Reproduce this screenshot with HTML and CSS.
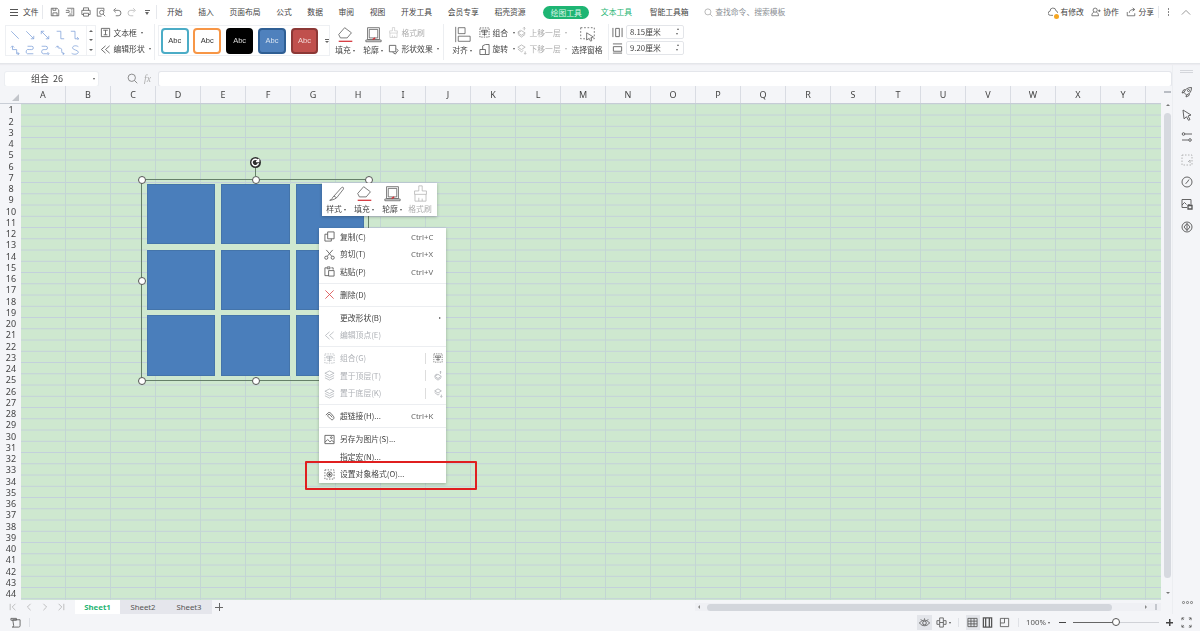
FILE: index.html
```html
<!DOCTYPE html>
<html lang="zh-CN">
<head>
<meta charset="utf-8">
<title>WPS 表格</title>
<link rel="stylesheet" href="styles.css">
</head>
<body>
<svg class="defs" width="0" height="0" aria-hidden="true">
  <defs>
    <symbol id="i-save" viewBox="0 0 12 12"><path d="M1.500 1.500h7l2 2v7h-9zM3.500 10.500v-3.500h5v3.500M3.500 1.500v2.500h3.500v-2.500"/></symbol>
    <symbol id="i-export" viewBox="0 0 12 12"><path d="M2.500 1.500h8v9h-7M1 4h4M1 6.500h4v-2M7 3.500h2M7 6h2M5 8.500h4"/></symbol>
    <symbol id="i-print" viewBox="0 0 12 12"><path d="M3 4v-3h6v3M3 9h-2v-5h10v5h-2M3 7.500h6v3.500h-6z"/></symbol>
    <symbol id="i-preview" viewBox="0 0 12 12"><path d="M9.500 5v-3.500h-8v9.500h5"/><circle cx="6.800" cy="6.500" r="2.500"/><path d="M8.500 8.500l2.500 2.500"/></symbol>
    <symbol id="i-undo" viewBox="0 0 12 12"><path d="M3 4h4.500a3 3 0 0 1 0 6.500h-3M4.500 1.500l-2.500 2.500 2.500 2.500"/></symbol>
    <symbol id="i-redo" viewBox="0 0 12 12"><path d="M9 4h-4.500a3 3 0 0 0 0 6.500h3M7.500 1.500l2.500 2.500-2.500 2.500"/></symbol>
    <symbol id="i-l1" viewBox="0 0 12 12"><path d="M1.500 1.500l9 9"/></symbol>
    <symbol id="i-l2" viewBox="0 0 12 12"><path d="M1.500 1.500l9 9M10.500 7v3.500h-3.500"/></symbol>
    <symbol id="i-l3" viewBox="0 0 12 12"><path d="M1.500 1.500l9 9M5 1.500h-3.500v3.500M10.500 7v3.500h-3.500"/></symbol>
    <symbol id="i-l4" viewBox="0 0 12 12"><path d="M2 1.500h5v9h4"/></symbol>
    <symbol id="i-l5" viewBox="0 0 12 12"><path d="M1 1.500h5v9h4M8.500 8.500l2 2-2 2"/></symbol>
    <symbol id="i-l6" viewBox="0 0 12 12"><path d="M1 3l2-2 2 2M3 1.500v4h5v5h3M9 8.500l2 2-2 1.500"/></symbol>
    <symbol id="i-l7" viewBox="0 0 12 12"><path d="M3 1.500h5a2 2 0 0 1 0 4h-3a2.500 2.500 0 0 0-2 5h7"/></symbol>
    <symbol id="i-l8" viewBox="0 0 12 12"><path d="M2 1.500h5a2 2 0 0 1 0 4h-2a2.500 2.500 0 0 0-1 5h6M9 8.500l2 2-2 1.500"/></symbol>
    <symbol id="i-l9" viewBox="0 0 12 12"><path d="M1 3l2-2 2 2M3 1.500c0 4 5 1 5 4s0 5 3 5M9 8.500l2 2-2 1.500"/></symbol>
    <symbol id="i-l10" viewBox="0 0 12 12"><path d="M10 2c-3-2-7-1-7 1.500s7 2.500 7 5-5 3.500-8 1.500"/></symbol>
    <symbol id="i-textbox" viewBox="0 0 12 12"><path d="M1.500 1.500h9v9h-9zM3.500 3.500h5M6 3.500v5M4 8.500h4"/></symbol>
    <symbol id="i-edit" viewBox="0 0 12 12"><path d="M6 2l-4.500 4 4.500 4M10.500 2l-4.500 4 4.500 4"/></symbol>
    <symbol id="i-fill" viewBox="0 0 20 20"><path d="M9 2l8 6-5 6h-8l-2-4z"/><path class="red" d="M2 18h16"/></symbol>
    <symbol id="i-outline" viewBox="0 0 20 20"><path d="M3 2h14v14h-14zM5 4h10v10h-10zM1 16.500h18v2h-18z"/><path class="red" d="M9 16l3-2"/></symbol>
    <symbol id="i-brush" viewBox="0 0 20 20"><path d="M8 1h4v6h5v4h-14v-4h5zM3.500 11v8h13v-8M8 19v-4M12 19v-3"/></symbol>
    <symbol id="i-effect" viewBox="0 0 12 12"><path d="M1.500 1.500h7v7h-7zM9 5l2 2-3 4-3-2"/></symbol>
    <symbol id="i-align" viewBox="0 0 20 20"><path d="M2 1v18M5 2h8v7h-8zM5 12h14v6h-14z"/></symbol>
    <symbol id="i-group" viewBox="0 0 12 12"><path stroke-dasharray="1.500 1.200" d="M1 1h10v10h-10z"/><path d="M3 3.500h6v2h-6zM6 3.500v6M3.500 8h5"/></symbol>
    <symbol id="i-rotate" viewBox="0 0 12 12"><path d="M1 6h6v5.500h-6zM4 6v-4l3-1.500 4 0v11h-4"/></symbol>
    <symbol id="i-up" viewBox="0 0 12 12"><path d="M6 4l4 2.500-4 2.500-4-2.500zM2 8l4 3 4-3M9 3.500v-3M7.800 1.500l1.200-1.200 1.200 1.200"/><path d="M5 3.500l-3 2"/></symbol>
    <symbol id="i-down" viewBox="0 0 12 12"><path d="M6 1l4 2.500-4 2.500-4-2.500zM2 5.500l4 3 2-1.500M10 8v3M8.800 10l1.200 1.200 1.200-1.200"/></symbol>
    <symbol id="i-pane" viewBox="0 0 20 20"><path stroke-dasharray="2 2" d="M2 2h16v13h-16z"/><path d="M9 8l8 5-3 .8 1 3.500-1.500.5-1.500-3.200-3 1.800z" fill="#fff"/></symbol>
    <symbol id="i-w" viewBox="0 0 12 12"><path d="M1 1v10M11 1v10M4 1.500h4v9h-4z"/></symbol>
    <symbol id="i-h" viewBox="0 0 12 12"><path d="M1 1h10M1 11h10M1.500 4h9v5h-9z"/></symbol>
    <symbol id="i-search" viewBox="0 0 12 12"><circle cx="5.200" cy="5.200" r="4"/><path d="M8.200 8.200l3 3"/></symbol>
    <symbol id="i-cloud" viewBox="0 0 12 12"><path d="M6 10h-3a2.500 2.500 0 0 1-.5-5 3.500 3.500 0 0 1 7-.5 2.500 2.500 0 0 1 2 2.500"/></symbol>
    <symbol id="i-user" viewBox="0 0 12 12"><circle cx="5" cy="3.800" r="2.500"/><path d="M1 10.500c0-3 1.500-4 2.500-4.500M6.500 6c1 .5 2.500 1.500 2.500 4.500h-8M10 3v3M8.500 4.500h3"/></symbol>
    <symbol id="i-share" viewBox="0 0 12 12"><path d="M1.500 6v4.500h9v-3M4 7c0-3 2-4 6-4M8 1l2.500 2-2.500 2"/></symbol>
    <symbol id="i-brushpen" viewBox="0 0 20 20"><path d="M2 18c3 0 3-4 5-5l9-10c1.500-1 3 0 2 2l-7 9c-1 2-6 4-9 4zM7 13l3 2"/></symbol>
    <symbol id="i-copy" viewBox="0 0 12 12"><path d="M4 1h7v7.500h-7zM4 3.500h-3v7.500h7v-2.500"/></symbol>
    <symbol id="i-cut" viewBox="0 0 12 12"><circle cx="2.500" cy="9.500" r="1.700"/><circle cx="9.500" cy="9.500" r="1.700"/><path d="M3.500 8l6-7M8.500 8l-6-7"/></symbol>
    <symbol id="i-paste" viewBox="0 0 12 12"><path d="M3 2h-2v8.500h4M8 2h2v2M3.500 1h3v2h-3zM5 5h6v6h-6z"/></symbol>
    <symbol id="i-x" viewBox="0 0 12 12"><path d="M1.500 1.500l9 9M10.500 1.500l-9 9"/></symbol>
    <symbol id="i-layer" viewBox="0 0 12 12"><path d="M6 1l5 2.500-5 2.500-5-2.500zM1 6l5 2.500 5-2.500M1 8.500l5 2.500 5-2.500"/></symbol>
    <symbol id="i-link" viewBox="0 0 12 12"><path d="M2 4.500l2.500-2.500c1-1 2.500 0 3 .5l2.500 3c1 1 1 2 .5 3s-2 1.500-3 .5l-3-3c-.5-1-.5-1.500 0-2s1.500-.5 2 0l2.500 3"/></symbol>
    <symbol id="i-pic" viewBox="0 0 12 12"><path d="M1 1.500h10v9h-10zM1 9l3-3 2.500 2.500 2-1.500 2.500 2"/><circle cx="8" cy="4" r="1"/></symbol>
    <symbol id="i-format" viewBox="0 0 12 12"><path stroke-dasharray="1.500 1.500" d="M1 1h10v10h-10z"/><circle cx="6" cy="6" r="2.800"/><circle cx="6" cy="6" r="1" fill="#555"/></symbol>
    <symbol id="i-eye" viewBox="0 0 12 12"><path d="M.5 6.500c3-4 8-4 11 0-3 4-8 4-11 0z"/><circle cx="6" cy="6.500" r="2"/><path d="M2 2.500l1 1.200M6 1.500v1.500M10 2.500l-1 1.200"/></symbol>
    <symbol id="i-cross" viewBox="0 0 12 12"><path d="M4 1h4v3h3v4h-3v3h-4v-3h-3v-4h3zM4 4v4M8 4v4M4 6h4"/></symbol>
    <symbol id="i-normal" viewBox="0 0 12 12"><path d="M1 1.500h10v9h-10zM1 4.500h10M1 7.500h10M4.300 1.500v9M7.700 1.500v9"/></symbol>
    <symbol id="i-page" viewBox="0 0 12 12"><path d="M1.500 1h9v10h-9zM4 1v10M8 1v10" stroke-width="1.400"/></symbol>
    <symbol id="i-break" viewBox="0 0 12 12"><path d="M1.500 1.500h9v9h-9zM6 1.500v5h-4.500"/></symbol>
    <symbol id="i-full" viewBox="0 0 12 12"><path d="M1 3.500v-2.500h2.500M8.500 1h2.500v2.500M1 8.500v2.500h2.500M11 8.500v2.500h-2.500M1 1l2 2M11 1l-2 2M1 11l2-2M11 11l-2-2"/></symbol>
    <symbol id="i-macro" viewBox="0 0 12 12"><path d="M3 3h8v6.500a1.500 1.500 0 0 1-1.500 1.500h-7a1.500 1.500 0 0 0 1.500-1.500zM1 1.500h6v2h-6z"/></symbol>
    <symbol id="i-rocket" viewBox="0 0 12 12"><path d="M10.500 1.500c-4 0-6 1.500-7.500 5l2.500 2.500c3.500-1.500 5-3.500 5-7.500zM3 6.500l-2 .5 1.500-3 2-.5M5.500 9l-.5 2 3-1.500.5-2"/><circle cx="7.500" cy="4.500" r="1"/></symbol>
    <symbol id="i-cursor" viewBox="0 0 12 12"><path d="M2 1l8 5-3 1 2 3.500-1.500 .8-2-3.500-2.500 2z"/></symbol>
    <symbol id="i-sliders" viewBox="0 0 12 12"><circle cx="2.500" cy="3" r="1.300"/><path d="M4 3h7M1 9h6.500"/><circle cx="9" cy="9" r="1.300"/></symbol>
    <symbol id="i-sel" viewBox="0 0 12 12"><path stroke-dasharray="1.500 1.500" d="M1 1h10v10h-10z"/><path d="M7 8l2-2v3"/></symbol>
    <symbol id="i-clock" viewBox="0 0 12 12"><circle cx="6" cy="6" r="5"/><path d="M8 3.500l-2 3-1.500 1"/></symbol>
    <symbol id="i-imgedit" viewBox="0 0 12 12"><path d="M1 1.500h9v6M1 1.500v8h5M1 7l2.500-2.500 2 2"/><path d="M7 7.500h4v3.500h-4zM8 6v1.500" stroke-width="1.300"/></symbol>
    <symbol id="i-badge" viewBox="0 0 12 12"><circle cx="6" cy="6" r="5"/><path d="M6 2.500l3 3.500-3 3.500-3-3.500zM6 2.500v7"/></symbol>
    <symbol id="i-rot" viewBox="0 0 12 12"><path d="M8.800 4.200a3.500 3.500 0 1 0 .4 2.500M9.500 2v3h-3"/></symbol>
  </defs>
</svg>

<header class="titlebar">
  <div class="menu-btn">
    <span class="burger"><i></i><i></i><i></i></span>
    <span class="file">文件</span>
  </div>
  <div class="qa">
    <span class="qa-item"><svg class="ic ic10"><use href="#i-save"/></svg></span>
    <span class="qa-item"><svg class="ic ic10"><use href="#i-export"/></svg></span>
    <span class="qa-item"><svg class="ic ic10"><use href="#i-print"/></svg></span>
    <span class="qa-item"><svg class="ic ic10"><use href="#i-preview"/></svg></span>
    <span class="qa-item"><svg class="ic ic10"><use href="#i-undo"/></svg></span>
    <span class="qa-item dim"><svg class="ic ic10"><use href="#i-redo"/></svg></span>
    <span class="qa-item"><span class="qa-more"></span></span>
  </div>
  <nav class="tabs-nav">
    <span>开始</span><span>插入</span><span>页面布局</span><span>公式</span><span>数据</span><span>审阅</span><span>视图</span><span>开发工具</span><span>会员专享</span><span>稻壳资源</span>
    <span class="pill">绘图工具</span>
    <span class="green">文本工具</span>
    <span class="smart">智能工具箱</span>
    <span class="search"><svg class="ic ic9"><use href="#i-search"/></svg>查找命令、搜索模板</span>
  </nav>
  <div class="title-right">
    <span class="tr-item cloud"><svg class="ic ic10"><use href="#i-cloud"/></svg><b class="dot"></b>有修改</span>
    <span class="tr-item"><svg class="ic ic10"><use href="#i-user"/></svg>协作</span>
    <span class="tr-item"><svg class="ic ic10"><use href="#i-share"/></svg>分享</span>
    <span class="tr-dots"><i></i><i></i><i></i></span>
    <svg class="tr-chevron" viewBox="0 0 12 8"><path d="M1 6.500l5-5 5 5"/></svg>
  </div>
</header>

<section class="ribbon">
  <div class="gallery lines">
    <div class="line-grid">
      <svg class="ic line"><use href="#i-l1"/></svg><svg class="ic line"><use href="#i-l2"/></svg><svg class="ic line"><use href="#i-l3"/></svg><svg class="ic line"><use href="#i-l4"/></svg><svg class="ic line"><use href="#i-l5"/></svg>
      <svg class="ic line"><use href="#i-l6"/></svg><svg class="ic line"><use href="#i-l7"/></svg><svg class="ic line"><use href="#i-l8"/></svg><svg class="ic line"><use href="#i-l9"/></svg><svg class="ic line"><use href="#i-l10"/></svg>
    </div>
    <div class="gal-scroll"><i class="up"></i><i class="dn"></i><i class="dn more"></i></div>
  </div>
  <div class="stack textgroup">
    <span class="cmd"><svg class="ic ic11"><use href="#i-textbox"/></svg>文本框<em class="caret"></em></span>
    <span class="cmd"><svg class="ic ic11"><use href="#i-edit"/></svg>编辑形状<em class="caret"></em></span>
  </div>
  <div class="vsep sep1"></div>
  <div class="gallery styles">
    <span class="abc a1">Abc</span><span class="abc a2">Abc</span><span class="abc a3">Abc</span><span class="abc a4">Abc</span><span class="abc a5">Abc</span>
    <span class="abc-more"></span>
  </div>
  <div class="big fill"><svg class="ic ic17"><use href="#i-fill"/></svg><span>填充<em class="caret"></em></span></div>
  <div class="big outline"><svg class="ic ic17"><use href="#i-outline"/></svg><span>轮廓<em class="caret"></em></span></div>
  <div class="stack effects">
    <span class="cmd dim"><svg class="ic ic11"><use href="#i-brush"/></svg>格式刷</span>
    <span class="cmd"><svg class="ic ic11"><use href="#i-effect"/></svg>形状效果<em class="caret"></em></span>
  </div>
  <div class="vsep sep2"></div>
  <div class="big align"><svg class="ic ic17"><use href="#i-align"/></svg><span>对齐<em class="caret"></em></span></div>
  <div class="stack grp">
    <span class="cmd"><svg class="ic ic11"><use href="#i-group"/></svg>组合<em class="caret"></em></span>
    <span class="cmd"><svg class="ic ic11"><use href="#i-rotate"/></svg>旋转<em class="caret"></em></span>
  </div>
  <div class="stack layers">
    <span class="cmd dim"><svg class="ic ic11"><use href="#i-up"/></svg>上移一层<em class="caret"></em></span>
    <span class="cmd dim"><svg class="ic ic11"><use href="#i-down"/></svg>下移一层<em class="caret"></em></span>
  </div>
  <div class="big pane"><svg class="ic ic17"><use href="#i-pane"/></svg><span>选择窗格</span></div>
  <div class="vsep sep3"></div>
  <div class="sizes">
    <div class="size-row"><svg class="ic ic11"><use href="#i-w"/></svg><span class="spin">8.15厘米<em class="arrows"></em></span></div>
    <div class="size-row"><svg class="ic ic11"><use href="#i-h"/></svg><span class="spin">9.20厘米<em class="arrows"></em></span></div>
  </div>
</section>

<div class="workspace">
  <div class="work-main">
    <div class="formula">
      <div class="namebox">组合&nbsp;&nbsp;26<em class="caret"></em></div>
      <svg class="ic ic11 zoomi"><use href="#i-search"/></svg>
      <span class="fx">fx</span>
      <div class="input"></div>
    </div>
    <div class="sheet-row">
      <div class="sheet">
        <div class="corner"><i></i></div>
        <div class="cols">
          <span>A</span><span>B</span><span>C</span><span>D</span><span>E</span><span>F</span><span>G</span><span>H</span><span>I</span><span>J</span><span>K</span><span>L</span><span>M</span><span>N</span><span>O</span><span>P</span><span>Q</span><span>R</span><span>S</span><span>T</span><span>U</span><span>V</span><span>W</span><span>X</span><span>Y</span><span></span>
        </div>
        <div class="rows">
          <span>1</span><span>2</span><span>3</span><span>4</span><span>5</span><span>6</span><span>7</span><span>8</span><span>9</span><span>10</span><span>11</span><span>12</span><span>13</span><span>14</span><span>15</span><span>16</span><span>17</span><span>18</span><span>19</span><span>20</span><span>21</span><span>22</span><span>23</span><span>24</span><span>25</span><span>26</span><span>27</span><span>28</span><span>29</span><span>30</span><span>31</span><span>32</span><span>33</span><span>34</span><span>35</span><span>36</span><span>37</span><span>38</span><span>39</span><span>40</span><span>41</span><span>42</span><span>43</span><span>44</span>
        </div>
        <div class="cells"></div>

        <div class="shape-group">
          <div class="blocks"><i></i><i></i><i></i><i></i><i></i><i></i><i></i><i></i><i></i></div>
          <b class="h h-tl"></b><b class="h h-tc"></b><b class="h h-tr"></b><b class="h h-ml"></b><b class="h h-bl"></b><b class="h h-bc"></b>
          <span class="rot-stem"></span>
          <span class="rot"><svg viewBox="0 0 12 12"><use href="#i-rot"/></svg></span>
        </div>

        <div class="mini">
          <div class="mini-item"><svg class="ic ic17"><use href="#i-brushpen"/></svg><span>样式<em class="caret"></em></span></div>
          <div class="mini-item"><svg class="ic ic17"><use href="#i-fill"/></svg><span>填充<em class="caret"></em></span></div>
          <div class="mini-item"><svg class="ic ic17"><use href="#i-outline"/></svg><span>轮廓<em class="caret"></em></span></div>
          <div class="mini-item dim"><svg class="ic ic17"><use href="#i-brush"/></svg><span>格式刷</span></div>
        </div>

        <div class="ctx">
          <div class="mi"><svg class="ic ic11"><use href="#i-copy"/></svg><span class="lb">复制(C)</span><span class="sc">Ctrl+C</span></div>
          <div class="mi"><svg class="ic ic11"><use href="#i-cut"/></svg><span class="lb">剪切(T)</span><span class="sc">Ctrl+X</span></div>
          <div class="mi"><svg class="ic ic11"><use href="#i-paste"/></svg><span class="lb">粘贴(P)</span><span class="sc">Ctrl+V</span></div>
          <hr>
          <div class="mi"><svg class="ic ic11 redline"><use href="#i-x"/></svg><span class="lb">删除(D)</span></div>
          <hr>
          <div class="mi"><span class="noicon"></span><span class="lb">更改形状(B)</span><em class="sub"></em></div>
          <div class="mi off"><svg class="ic ic11"><use href="#i-edit"/></svg><span class="lb">编辑顶点(E)</span></div>
          <hr>
          <div class="mi off"><svg class="ic ic11"><use href="#i-group"/></svg><span class="lb">组合(G)</span><span class="side active"><svg class="ic ic10"><use href="#i-group"/></svg></span></div>
          <div class="mi off"><svg class="ic ic11"><use href="#i-layer"/></svg><span class="lb">置于顶层(T)</span><span class="side"><svg class="ic ic10"><use href="#i-up"/></svg></span></div>
          <div class="mi off"><svg class="ic ic11"><use href="#i-layer"/></svg><span class="lb">置于底层(K)</span><span class="side"><svg class="ic ic10"><use href="#i-down"/></svg></span></div>
          <hr>
          <div class="mi"><svg class="ic ic11"><use href="#i-link"/></svg><span class="lb">超链接(H)...</span><span class="sc">Ctrl+K</span></div>
          <hr>
          <div class="mi"><svg class="ic ic11"><use href="#i-pic"/></svg><span class="lb">另存为图片(S)...</span></div>
          <div class="mi"><span class="noicon"></span><span class="lb">指定宏(N)...</span></div>
          <div class="mi"><svg class="ic ic11"><use href="#i-format"/></svg><span class="lb">设置对象格式(O)...</span></div>
        </div>

        <div class="callout"></div>
      </div>
      <div class="vscroll">
        <i class="vs-dash"></i>
        <i class="vs-up"></i>
        <i class="vs-thumb"></i>
        <i class="vs-down"></i>
      </div>
    </div>
    <div class="tabbar">
      <div class="tab-nav">
        <svg viewBox="0 0 10 10"><path d="M1.500 1v8M8 1l-4 4 4 4"/></svg>
        <svg viewBox="0 0 10 10"><path d="M7 1l-4 4 4 4"/></svg>
        <svg viewBox="0 0 10 10"><path d="M3 1l4 4-4 4"/></svg>
        <svg viewBox="0 0 10 10"><path d="M8.500 1v8M2 1l4 4-4 4"/></svg>
      </div>
      <span class="tab on">Sheet1</span><span class="tab">Sheet2</span><span class="tab">Sheet3</span>
      <span class="tab-add"></span>
      <div class="hscroll"><i class="hs-left"></i><i class="hs-thumb"></i><i class="hs-right"></i><i class="hs-bar"></i></div>
    </div>
  </div>
  <aside class="sidebar">
    <i class="grip"></i>
    <svg class="ic ic12"><use href="#i-rocket"/></svg>
    <svg class="ic ic12"><use href="#i-cursor"/></svg>
    <svg class="ic ic12"><use href="#i-sliders"/></svg>
    <svg class="ic ic12 dim"><use href="#i-sel"/></svg>
    <svg class="ic ic12"><use href="#i-clock"/></svg>
    <svg class="ic ic12"><use href="#i-imgedit"/></svg>
    <svg class="ic ic12"><use href="#i-badge"/></svg>
    <span class="side-dots"><i></i><i></i><i></i></span>
  </aside>
</div>

<footer class="status">
  <div class="st-left">
    <svg class="ic ic11"><use href="#i-macro"/></svg>
    <i class="st-sep"></i>
  </div>
  <div class="st-right">
    <span class="st-btn eye on"><svg class="ic ic11"><use href="#i-eye"/></svg></span>
    <span class="st-btn cross"><svg class="ic ic11"><use href="#i-cross"/></svg><em class="caret"></em></span>
    <i class="st-sep"></i>
    <span class="st-btn on view first"><svg class="ic ic11"><use href="#i-normal"/></svg></span>
    <span class="st-btn view"><svg class="ic ic11"><use href="#i-page"/></svg></span>
    <span class="st-btn view"><svg class="ic ic11"><use href="#i-break"/></svg></span>
    <i class="st-sep"></i>
    <span class="pct">100%<em class="caret"></em></span>
    <i class="minus"></i>
    <span class="slider"><b class="fillbar"></b><b class="knob"></b></span>
    <i class="plus"></i>
    <svg class="ic ic11 full"><use href="#i-full"/></svg>
  </div>
</footer>
</body>
</html>
```

FILE: styles.css
```css
* { box-sizing: border-box; }
html, body { margin: 0; padding: 0; }
body {
  width: 1200px;
  height: 631px;
  overflow: hidden;
  display: flex;
  flex-direction: column;
  background: #f4f5f8;
  color: #444;
  font: 7.8px/1 "Noto Sans CJK SC", "Noto Sans", sans-serif;
  filter: blur(.3px);
}
.defs { position: absolute; }
i, em, b { font-style: normal; font-weight: normal; }
.ic { fill: none; stroke: #555; stroke-width: .9; flex: none; overflow: visible; }
.ic .red, .red { stroke: #d4343a; stroke-width: 1.500; }
.ic10 { width: 10px; height: 10px; }
.ic9 { width: 9px; height: 9px; }
.ic11 { width: 11px; height: 11px; }
.ic12 { width: 12px; height: 12px; }
.ic17 { width: 17px; height: 17px; }
.dim { opacity: .45; }
.caret {
  display: inline-block;
  width: 0;
  height: 0;
  margin-left: 2px;
  vertical-align: middle;
  border: 1.800px solid transparent;
  border-top: 2px solid #555;
  border-bottom: 0;
}

/* title bar */
.titlebar {
  height: 24px;
  flex: none;
  background: #fff;
  display: flex;
  align-items: center;
  position: relative;
}
.menu-btn {
  width: 43px;
  padding-left: 10px;
  height: 14px;
  display: flex;
  align-items: center;
  gap: 5px;
  border-right: 1px solid #e6e8ec;
}
.burger { width: 8px; display: flex; flex-direction: column; gap: 2px; }
.burger i { display: block; height: 1px; background: #555; }
.file { width: 16px; }
.qa {
  display: flex;
  width: 114px;
  padding-left: 4px;
  height: 14px;
  align-items: center;
  border-right: 1px solid #e6e8ec;
}
.qa-item { width: 15.500px; display: flex; justify-content: center; align-items: center; }
.qa-more { width: 5px; height: 5px; border-top: 1px solid #666; position: relative; }
.qa-more::after {
  content: "";
  position: absolute;
  left: 0;
  top: 1px;
  border: 2.500px solid transparent;
  border-top: 3px solid #666;
  border-bottom: 0;
}
.tabs-nav {
  margin-left: 10px;
  display: flex;
  align-items: center;
  gap: 15.600px;
  white-space: nowrap;
}
.pill {
  width: 46px;
  height: 13px;
  border-radius: 7px;
  background: #1eb573;
  color: #dff5ea;
  text-align: center;
  line-height: 13px;
  margin-left: 2px;
  margin-right: -4px;
}
.green { color: #1fb574; }
.smart { margin-left: 2px; }
.search { display: flex; align-items: center; gap: 2px; color: #8b8f96; }
.search .ic { stroke: #999; }
.title-right {
  position: absolute;
  right: 7px;
  top: 5px;
  height: 14px;
  display: flex;
  align-items: center;
}
.tr-item { display: flex; align-items: center; gap: 2.500px; margin-right: 7px; position: relative; }
.dot {
  position: absolute;
  left: 6px;
  top: 7px;
  width: 5px;
  height: 5px;
  border-radius: 50%;
  background: #f5a623;
}
.tr-dots {
  width: 20px;
  height: 12px;
  margin-left: -3px;
  border-left: 1px solid #e6e8ec;
  display: flex;
  flex-direction: column;
  align-items: center;
  justify-content: center;
  gap: 1.500px;
}
.tr-dots i { width: 1.500px; height: 1.500px; background: #888; }
.tr-chevron { width: 10px; height: 7px; margin-left: 3px; margin-right: 2px; fill: none; stroke: #777; stroke-width: .9; }

/* ribbon */
.ribbon {
  height: 40px;
  flex: none;
  background: #fff;
  display: flex;
  align-items: flex-start;
  border-bottom: 1px solid #e4e6ea;
  box-shadow: 0 1px 1px #ececf0;
  position: relative;
  z-index: 1;
}
.gallery { border: 1px solid #eef0f3; height: 31px; margin-top: 1px; flex: none; }
.lines { width: 91px; margin-left: 5px; display: flex; }
.line-grid {
  width: 80px;
  padding: 1px 0 0 1px;
  display: grid;
  grid-template-columns: repeat(5, 15.200px);
  grid-auto-rows: 15px;
  justify-items: center;
  align-items: center;
}
.line { width: 10px; height: 10px; stroke: #7b9ed8; }
.gal-scroll {
  flex: 1;
  display: flex;
  flex-direction: column;
  justify-content: space-around;
  align-items: center;
  border-left: 1px solid #f0f1f4;
}
.gal-scroll i { width: 0; height: 0; border: 2px solid transparent; }
.gal-scroll .up { border-top: 0; border-bottom: 2.500px solid #666; }
.gal-scroll .dn { border-bottom: 0; border-top: 2.500px solid #666; }
.stack { display: flex; flex-direction: column; gap: 5.500px; padding-top: 3px; flex: none; }
.cmd { display: flex; align-items: center; gap: 2.500px; height: 11px; white-space: nowrap; }
.textgroup { width: 50px; margin-left: 4px; }
.vsep { width: 1px; height: 36px; background: #eceef1; flex: none; }
.sep1 { margin-left: 4px; }
.styles {
  width: 172px;
  margin-left: 3px;
  display: flex;
  align-items: center;
  padding-left: 2px;
  gap: 4.800px;
}
.abc {
  width: 28px;
  height: 26px;
  border-radius: 4px;
  display: flex;
  align-items: center;
  justify-content: center;
  font: 7.500px "Liberation Sans", sans-serif;
  border: 2px solid;
}
.a1 { border-color: #4bacc6; background: #fff; color: #333; }
.a2 { border-color: #f79646; background: #fff; color: #333; }
.a3 { border-color: #000; background: #000; color: #ddd; }
.a4 { border-color: #2f5f94; background: #4f81bd; color: #d6e2f0; }
.a5 { border-color: #8c3836; background: #c0504d; color: #f3d7d6; }
.abc-more { margin-left: 2px; width: 4px; height: 4px; border-top: 1px solid #666; position: relative; }
.abc-more::after {
  content: "";
  position: absolute;
  left: 0;
  top: 1px;
  border: 2px solid transparent;
  border-top: 2.500px solid #666;
  border-bottom: 0;
}
.big {
  display: flex;
  flex-direction: column;
  align-items: center;
  justify-content: space-between;
  height: 30px;
  padding-top: 2px;
  flex: none;
  white-space: nowrap;
}
.fill { width: 24px; margin-left: 3px; }
.outline { width: 24px; margin-left: 4px; }
.effects { width: 50px; margin-left: 3px; }
.sep2 { margin-left: 5px; }
.align { width: 26px; margin-left: 5px; }
.grp { width: 35px; margin-left: 4px; }
.layers { width: 52px; margin-left: 2px; }
.pane { width: 34px; margin-left: 2px; }
.sep3 { margin-left: 4px; }
.sizes { margin-left: 3px; padding-top: 1px; display: flex; flex-direction: column; gap: 2px; }
.size-row { display: flex; align-items: center; gap: 3px; height: 14px; }
.spin {
  width: 58px;
  height: 14px;
  border: 1px solid #e3e5e9;
  border-radius: 2px;
  padding-left: 3px;
  line-height: 12px;
  position: relative;
}
.arrows {
  position: absolute;
  right: 4px;
  top: 2px;
  width: 0;
  height: 0;
  border: 1.800px solid transparent;
  border-bottom: 2px solid #666;
  border-top: 0;
}
.arrows::after {
  content: "";
  position: absolute;
  left: -2px;
  top: 5px;
  border: 1.800px solid transparent;
  border-top: 2px solid #666;
  border-bottom: 0;
}

/* workspace */
.workspace { height: 550px; flex: none; display: flex; }
.work-main { width: 1172px; flex: none; display: flex; flex-direction: column; }
.formula {
  height: 22px;
  flex: none;
  display: flex;
  align-items: center;
  padding: 7px 1px 0 5px;
}
.namebox {
  width: 93px;
  height: 14px;
  background: #fff;
  border-radius: 2px;
  box-shadow: 0 0 0 1px #eceef2;
  padding-left: 26px;
  line-height: 14px;
  font-size: 9px;
  position: relative;
}
.namebox .caret { position: absolute; right: 3px; top: 6px; }
.zoomi { margin-left: 29px; stroke: #777; }
.fx { margin-left: 6px; width: 15px; font: italic 9.500px "Liberation Serif", serif; color: #aaa; }
.input { flex: 1; height: 14px; background: #fff; box-shadow: 0 0 0 1px #e4e6eb; border-radius: 2px; }
.sheet-row { height: 514px; flex: none; display: flex; }
.sheet {
  width: 1161px;
  flex: none;
  position: relative;
  overflow: hidden;
  display: grid;
  grid-template-columns: 21px 1fr;
  grid-template-rows: 18px 1fr;
}
.corner { position: relative; background: #f4f5f8; border-bottom: 1px solid #c9ced6; }
.corner i {
  position: absolute;
  right: 2px;
  bottom: 2px;
  border-style: solid;
  border-width: 0 0 7px 7px;
  border-color: transparent transparent #c3c6cb transparent;
}
.cols { display: flex; background: #f4f5f8; border-bottom: 1px solid #c6ccd6; overflow: hidden; }
.cols span {
  flex: 0 0 45px;
  text-align: center;
  font: 9px/18px "Noto Sans", sans-serif;
  color: #444;
  border-right: 1px solid #d9dce3;
}
.rows { display: grid; grid-template-rows: repeat(44, 11.250px); padding-top: .25px; background: #f4f5f8; }
.rows span {
  font: 9px/11px "Noto Sans", sans-serif;
  color: #444;
  text-align: center;
  padding-left: 1px;
}
.cells {
  background-color: #cee8cf;
  background-image:
    linear-gradient(to right, transparent 44px, #c3d6d3 44px),
    linear-gradient(to bottom, transparent 10.250px, #c3cfdb 10.250px);
  background-size: 45px 100%, 100% 11.250px;
  background-position: 0 0, 0 .25px;
}

/* shapes on the sheet */
.shape-group {
  position: absolute;
  left: 141px;
  top: 93px;
  width: 228px;
  height: 202px;
  border: 1px solid #66806a;
  padding: 4px 4px 4px 5px;
}
.blocks {
  display: grid;
  grid-template-columns: 68px 69px 68px;
  grid-template-rows: 60px 60px 61px;
  column-gap: 6px;
  row-gap: 5.500px;
  background: #cfe8d0;
}
.blocks i { background: #4a7ebb; border: 1px solid #4474aa; }
.h {
  position: absolute;
  width: 8px;
  height: 8px;
  border-radius: 50%;
  background: #fff;
  border: 1px solid #555;
}
.h-tl { left: -4.500px; top: -4.500px; }
.h-tc { left: 109.500px; top: -4.500px; }
.h-tr { right: -4.500px; top: -4.500px; }
.h-ml { left: -4.500px; top: 96.500px; }
.h-bl { left: -4.500px; bottom: -4.500px; }
.h-bc { left: 109.500px; bottom: -4.500px; }
.rot-stem { position: absolute; left: 113px; top: -12px; width: 1px; height: 9px; background: #66806a; }
.rot {
  position: absolute;
  left: 108px;
  top: -23px;
  width: 11px;
  height: 11px;
  border-radius: 50%;
  background: #2e2e2e;
}
.rot svg { display: block; width: 11px; height: 11px; fill: none; stroke: #fff; stroke-width: 1.500; }

.mini {
  position: absolute;
  left: 322px;
  top: 97px;
  width: 115px;
  height: 33px;
  background: #fff;
  box-shadow: 0 1px 3px rgba(0,0,0,.25);
  display: flex;
  padding: 2px 3px 0 0;
}
.mini-item {
  flex: 1;
  display: flex;
  flex-direction: column;
  align-items: center;
  gap: 3px;
  white-space: nowrap;
}
.ctx {
  position: absolute;
  left: 319px;
  top: 142px;
  width: 127px;
  background: #fff;
  box-shadow: 0 1px 3px rgba(0,0,0,.25);
  display: flex;
  flex-direction: column;
}
.ctx hr { margin: 2.250px 0; height: 1px; border: 0; background: #eceef1; flex: none; }
.mi { height: 17.500px; flex: none; display: flex; align-items: center; padding-left: 5px; position: relative; white-space: nowrap; }
.mi > .ic { margin-right: 5px; }
.mi.off { color: #aeb1b6; }
.mi.off > .ic { stroke: #b5b8bd; }
.noicon { width: 16px; }
.redline { stroke: #d94a4a; }
.sc { position: absolute; left: 92px; color: #666; font: 7.800px "Noto Sans", sans-serif; }
.sub {
  position: absolute;
  right: 5px;
  border: 1.800px solid transparent;
  border-left: 2.500px solid #555;
  border-right: 0;
}
.side {
  position: absolute;
  left: 106px;
  width: 21px;
  height: 11px;
  padding-left: 7px;
  border-left: 1px solid #ddd;
  display: flex;
  align-items: center;
}
.side .ic { stroke: #a9acb1; }
.side.active .ic { stroke: #666; }
.callout {
  position: absolute;
  left: 305px;
  top: 375px;
  width: 172px;
  height: 29px;
  border: 2px solid #e01f1f;
  border-radius: 1px;
}

/* scrollbars */
.vscroll {
  width: 11px;
  flex: none;
  position: relative;
  background: #f4f5f8;
  display: flex;
  flex-direction: column;
  align-items: center;
  padding-left: 2px;
}
.vs-dash { width: 7px; height: 1.500px; background: #b9bdc4; margin-top: 5px; }
.vs-up {
  margin-top: 11px;
  border: 2px solid transparent;
  border-top: 0;
  border-bottom: 2.500px solid #777;
}
.vs-thumb { width: 7px; height: 465px; margin-top: 7px; background: #d6d9df; border-radius: 3.500px; }
.vs-down {
  margin-top: 14px;
  border: 2px solid transparent;
  border-bottom: 0;
  border-top: 2.500px solid #777;
}
.tabbar { height: 14px; flex: none; display: flex; align-items: stretch; position: relative; }
.tab-nav { width: 75px; display: flex; padding-left: 9px; gap: 8px; align-items: center; }
.tab-nav svg { width: 8px; height: 8px; fill: none; stroke: #aaa; stroke-width: .9; }
.tab {
  width: 46px;
  background: #e5e6ec;
  text-align: center;
  font: 7.800px/14px "Noto Sans", sans-serif;
  color: #555;
}
.tab.on { width: 45px; background: #fff; color: #1fb574; font-weight: 700; }
.tab-add {
  width: 8px;
  height: 8px;
  margin: 3px 0 0 3px;
  background:
    linear-gradient(#666, #666) center / 100% 1px no-repeat,
    linear-gradient(#666, #666) center / 1px 100% no-repeat;
}
.hscroll {
  position: absolute;
  left: 695px;
  right: 11px;
  top: 3px;
  height: 8px;
  background: #eff0f4;
  display: flex;
  align-items: center;
}
.hs-left {
  margin-left: 3px;
  border: 2px solid transparent;
  border-left: 0;
  border-right: 2.500px solid #888;
}
.hs-thumb { width: 405px; height: 7px; margin-left: 7px; background: #d3d6dc; border-radius: 3.500px; }
.hs-right {
  margin-left: 33px;
  border: 2px solid transparent;
  border-right: 0;
  border-left: 2.500px solid #888;
}
.hs-bar { margin-left: 8px; width: 2px; height: 6px; background: #c4c7cd; }

/* right sidebar */
.sidebar {
  width: 28px;
  flex: none;
  position: relative;
  display: flex;
  flex-direction: column;
  align-items: center;
  gap: 10.400px;
  border-left: 1px solid #eceef1;
  padding-top: 6px;
}
.grip {
  width: 13px;
  height: 3px;
  border-top: 1px solid #d4d6db;
  border-bottom: 1px solid #d4d6db;
  margin-bottom: 3px;
}
.side-dots { position: absolute; top: 537px; left: 9px; display: flex; gap: 1.500px; }
.side-dots i { width: 2.500px; height: 2.500px; border-radius: 50%; border: .7px solid #777; }

/* status bar */
.status {
  height: 17px;
  flex: none;
  display: flex;
  justify-content: space-between;
  align-items: center;
}
.st-left { display: flex; align-items: center; padding-left: 10px; gap: 8px; }
.st-sep { width: 1px; height: 9px; background: #dfe1e6; flex: none; }
.st-right { display: flex; align-items: center; padding-right: 8px; }
.st-btn { height: 15px; display: flex; align-items: center; justify-content: center; }
.st-btn.on { background: #e3e5ea; }
.eye { width: 15px; }
.cross { width: 20px; margin-left: 2px; margin-right: 4px; }
.view { width: 14px; margin-left: 2.500px; }
.view.first { margin-left: 7px; margin-right: -1.500px; }
.view + .st-sep { margin-left: 7px; }
.pct { margin-left: 7px; width: 25px; font-family: "Noto Sans", sans-serif; color: #555; }
.minus { width: 7px; height: 1.500px; background: #444; margin-left: 8px; }
.slider { width: 86px; height: 9px; margin-left: 7px; position: relative; }
.slider::before { content: ""; position: absolute; left: 0; right: 0; top: 4px; height: 1px; background: #d0d2d7; }
.fillbar { position: absolute; left: 0; top: 4px; width: 43px; height: 1px; background: #666; }
.knob {
  position: absolute;
  left: 39px;
  top: 0;
  width: 8px;
  height: 8px;
  border-radius: 50%;
  background: #fff;
  border: 1px solid #555;
}
.plus {
  width: 7px;
  height: 7px;
  margin-left: 7px;
  background:
    linear-gradient(#444, #444) center / 100% 1.500px no-repeat,
    linear-gradient(#444, #444) center / 1.500px 100% no-repeat;
}
.full { margin-left: 8px; }
```
